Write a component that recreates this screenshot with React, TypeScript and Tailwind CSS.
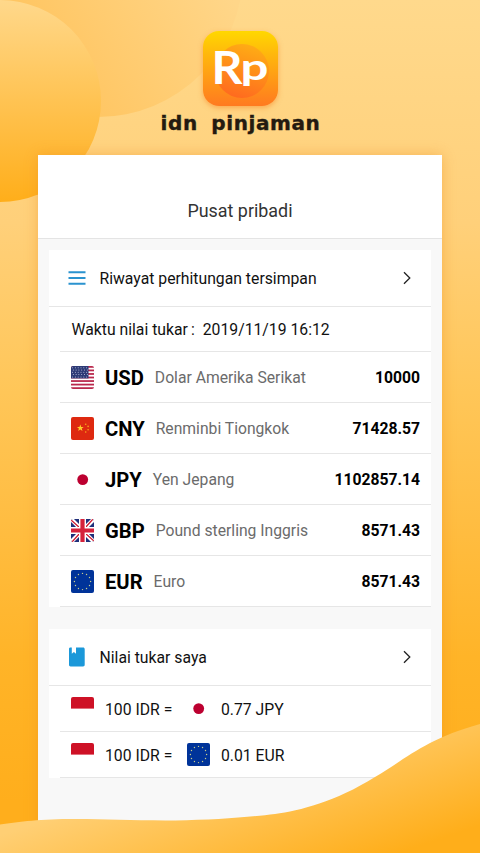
import type { ReactNode } from "react";

type Currency = "USD" | "CNY" | "JPY" | "GBP" | "EUR" | "IDR";

const balances: { code: Currency; name: string; amount: string }[] = [
  { code: "USD", name: "Dolar Amerika Serikat", amount: "10000" },
  { code: "CNY", name: "Renminbi Tiongkok", amount: "71428.57" },
  { code: "JPY", name: "Yen Jepang", amount: "1102857.14" },
  { code: "GBP", name: "Pound sterling Inggris", amount: "8571.43" },
  { code: "EUR", name: "Euro", amount: "8571.43" },
];

const rates: { code: Currency; value: string }[] = [
  { code: "JPY", value: "0.77 JPY" },
  { code: "EUR", value: "0.01 EUR" },
];

function FlagArt({ code }: { code: Currency }) {
  switch (code) {
    case "USD":
      return (
        <>
          <rect width="23" height="23" fill="#fff" />
          {[0, 1, 2, 3, 4, 5, 6].map((i) => (
            <rect key={i} y={i * 3.54} width="23" height="1.77" fill="#b9284c" />
          ))}
          <rect width="17.5" height="12.4" fill="#2c3a76" />
          {[0, 1, 2, 3, 4].map((row) =>
            [0, 1, 2, 3, 4, 5].map((col) => (
              <circle
                key={`${row}-${col}`}
                cx={1.6 + col * 2.8 + (row % 2) * 0.7}
                cy={1.7 + row * 2.3}
                r="0.5"
                fill="#c9cfe6"
              />
            )),
          )}
        </>
      );
    case "CNY":
      return (
        <>
          <rect width="23" height="23" fill="#de2910" />
          <path d="M9.3 7.5l.9 2.4h2.5l-2 1.6.8 2.5-2.2-1.5-2.1 1.5.7-2.5-2-1.6h2.5z" fill="#ffce2b" />
          <circle cx="14.7" cy="7.2" r="0.8" fill="#f8a51c" />
          <circle cx="17.1" cy="9.4" r="0.8" fill="#f8a51c" />
          <circle cx="17.1" cy="12.7" r="0.8" fill="#f8a51c" />
          <circle cx="14.7" cy="15" r="0.8" fill="#f8a51c" />
        </>
      );
    case "JPY":
      return <circle cx="11.7" cy="11.6" r="5.4" fill="#bc0030" />;
    case "GBP":
      return (
        <>
          <rect width="23" height="23" fill="#1f2f7a" />
          <path d="M0 0l23 23M23 0L0 23" stroke="#fff" strokeWidth="4.2" />
          <path d="M0 1l9 8M23 22l-9-8M22 0l-8 9M1 23l8-9" stroke="#cf142b" strokeWidth="1.2" />
          <path d="M11.5 0v23M0 11.5h23" stroke="#fff" strokeWidth="7" />
          <path d="M11.5 0v23M0 11.5h23" stroke="#d5213a" strokeWidth="4.2" />
        </>
      );
    case "EUR":
      return (
        <>
          <rect width="23" height="23" fill="#003399" />
          {Array.from({ length: 12 }, (_, i) => (
            <circle
              key={i}
              cx={11.5 + 8.1 * Math.sin((i * Math.PI) / 6)}
              cy={11.5 - 8.1 * Math.cos((i * Math.PI) / 6)}
              r="0.7"
              fill="#c5cc8c"
            />
          ))}
        </>
      );
    case "IDR":
      return <rect width="23" height="11.6" fill="#ce1126" />;
  }
}

function Flag({ code }: { code: Currency }) {
  return (
    <svg viewBox="0 0 23 23" className="size-[23px] shrink-0 rounded-[2px]">
      <FlagArt code={code} />
    </svg>
  );
}

function MenuIcon() {
  return (
    <svg viewBox="0 0 18 18" className="size-[18px]">
      <path d="M.5 3.2h17M.5 9h17M.5 14.8h17" stroke="#2b93cf" strokeWidth="1.9" />
    </svg>
  );
}

function BookIcon() {
  return (
    <svg viewBox="0 0 18 20" className="h-5 w-[18px]">
      <path
        d="M2.4.6h1.4v6.1l2.1-1.6L8 6.7V.6h7.1c.9 0 1.6.7 1.6 1.6v15.6c0 .9-.7 1.6-1.6 1.6H2.6c-.9 0-1.6-.7-1.6-1.6V2c0-.8.6-1.4 1.4-1.4z"
        fill="#1b98d9"
      />
    </svg>
  );
}

function PanelHeader({ icon, title }: { icon: ReactNode; title: string }) {
  return (
    <div className="flex h-[57px] items-center border-b border-[#e6e6e6] pr-5 pl-[19px]">
      {icon}
      <h2 className="ml-[13.5px] flex-1 pt-0.5 text-[15.75px]">{title}</h2>
      <svg viewBox="0 0 8 14" fill="none" className="h-3.5 w-2">
        <path d="M1 1.2l5.8 5.8L1 12.8" stroke="#222" strokeWidth="1.3" />
      </svg>
    </div>
  );
}

function Backdrop() {
  return (
    <svg viewBox="0 0 480 853" className="absolute inset-0 h-full w-full">
      <defs>
        <linearGradient id="sky" x1="0" y1="0" x2="0" y2="1">
          <stop offset="0" stopColor="#ffd98c" />
          <stop offset="0.26" stopColor="#ffd07a" />
          <stop offset="0.46" stopColor="#ffc658" />
          <stop offset="0.61" stopColor="#ffbd42" />
          <stop offset="0.77" stopColor="#ffb428" />
          <stop offset="0.94" stopColor="#ffae1c" />
        </linearGradient>
        <linearGradient id="sun" x1="0" y1="0" x2="0" y2="1">
          <stop offset="0" stopColor="#ffd88b" />
          <stop offset="1" stopColor="#ffae1a" />
        </linearGradient>
        <linearGradient id="halo" gradientUnits="userSpaceOnUse" x1="90" y1="110" x2="240" y2="10">
          <stop offset="0" stopColor="#ffc663" />
          <stop offset="1" stopColor="#ffd689" />
        </linearGradient>
      </defs>
      <rect width="480" height="853" fill="url(#sky)" />
      <circle cx="98" cy="-28" r="145" fill="url(#halo)" />
      <circle cx="0" cy="101" r="101" fill="url(#sun)" />
    </svg>
  );
}

function Wave() {
  return (
    <svg viewBox="0 0 480 133" className="absolute bottom-0 left-0 h-[133px] w-[480px]">
      <defs>
        <linearGradient id="wave" gradientUnits="userSpaceOnUse" x1="0" y1="115" x2="47" y2="253">
          <stop offset="0" stopColor="#ffcf74" />
          <stop offset="1" stopColor="#ffae1a" />
        </linearGradient>
      </defs>
      <path
        d="M0 104.5C20 101.5 40 99 75 99C110 99 135 100.7 175 100.4C215 100 250 97 275 94C300 90.5 335 82 375 57C403 41 425 19 480 4V133H0Z"
        fill="url(#wave)"
      />
    </svg>
  );
}

function Logo() {
  return (
    <svg viewBox="0 0 75 75" className="size-[75px] rounded-[16px] shadow-[0_2px_5px_rgba(245,130,30,0.5)]">
      <defs>
        <linearGradient id="tile" x1="0" y1="0" x2="0" y2="1">
          <stop offset="0" stopColor="#ffd800" />
          <stop offset="0.3" stopColor="#ffb80c" />
          <stop offset="1" stopColor="#ff7a20" />
        </linearGradient>
        <linearGradient id="coin" x1="0.7" y1="0" x2="0.4" y2="1">
          <stop offset="0" stopColor="#ffae14" />
          <stop offset="1" stopColor="#ff6a1f" />
        </linearGradient>
      </defs>
      <rect width="75" height="75" fill="url(#tile)" />
      <circle cx="39" cy="40" r="27" fill="url(#coin)" />
      <g fill="#fff" className="font-['Lato',sans-serif] font-bold">
        <text x="8.5" y="53" textLength="31" lengthAdjust="spacingAndGlyphs" className="text-[45px]">
          R
        </text>
        <text x="37.5" y="49" textLength="28" lengthAdjust="spacingAndGlyphs" className="text-[37px]">
          p
        </text>
      </g>
    </svg>
  );
}

export default function App() {
  return (
    <main className="relative h-[853px] w-[480px] overflow-hidden font-[Roboto,sans-serif] text-[#111]">
      <Backdrop />

      <div className="relative flex flex-col items-center">
        <header className="flex h-[155px] w-[161px] flex-col items-center pt-[31px] pl-px">
          <Logo />
          <h1 className="mt-[3px] font-['DejaVu_Sans',sans-serif] text-[20px] leading-[28px] font-bold tracking-[0.6px] whitespace-nowrap text-[#241a10] [-webkit-text-stroke:0.4px_#241a10] [word-spacing:6px]">
            idn pinjaman
          </h1>
        </header>

        <section className="h-[698px] w-[404px] bg-[#f8f8f8] shadow-[0_0_12px_rgba(235,145,35,0.45)]">
          <div className="flex h-[84px] items-end justify-center border-b border-[#e4e4e4] bg-white pb-[13px] text-[17.9px] text-[#333]">
            Pusat pribadi
          </div>

          <div className="mx-[11px] mt-[11px] bg-white">
            <PanelHeader icon={<MenuIcon />} title="Riwayat perhitungan tersimpan" />
            <div className="ml-[11px]">
              <div className="flex h-[45px] items-center border-b border-[#e6e6e6] pt-px pl-[11.5px] text-[15.75px]">
                <span>Waktu nilai tukar</span>
                <span className="ml-[3px]">:</span>
                <span className="ml-2">2019/11/19 16:12</span>
              </div>
              {balances.map((item) => (
                <div
                  key={item.code}
                  className="flex h-[51px] items-center border-b border-[#e6e6e6] px-[11px]"
                >
                  <Flag code={item.code} />
                  <span className="ml-[11px] pt-0.5 text-[20.2px] font-bold text-black">{item.code}</span>
                  <span className="ml-[11px] flex-1 pt-px text-[15.7px] text-[#6b6b6b]">{item.name}</span>
                  <span className="pt-px text-[15.7px] font-bold text-black">{item.amount}</span>
                </div>
              ))}
            </div>
          </div>

          <div className="mx-[11px] mt-[22px] bg-white">
            <PanelHeader icon={<BookIcon />} title="Nilai tukar saya" />
            <div className="ml-[11px]">
              {rates.map((rate) => (
                <div
                  key={rate.code}
                  className="flex h-[46px] items-center border-b border-[#e6e6e6] pl-[11px] text-[15.75px]"
                >
                  <Flag code="IDR" />
                  <span className="ml-[11px] w-[82px] pt-0.5">100 IDR =</span>
                  <Flag code={rate.code} />
                  <span className="ml-[11px] pt-0.5">{rate.value}</span>
                </div>
              ))}
            </div>
          </div>
        </section>
      </div>

      <Wave />
    </main>
  );
}
